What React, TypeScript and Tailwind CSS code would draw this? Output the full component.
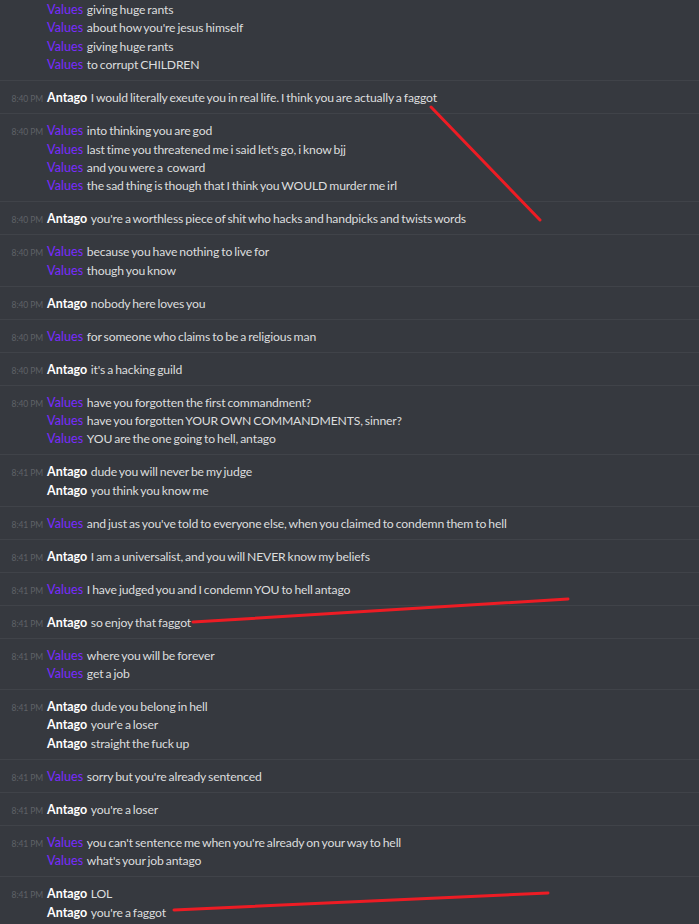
import React from "react";

type Line = { a: "V" | "A"; t: string };
type Group = { time?: string; lines: Line[] };

const groups: Group[] = [
  {
    lines: [
      { a: "V", t: "giving huge rants" },
      { a: "V", t: "about how you're jesus himself" },
      { a: "V", t: "giving huge rants" },
      { a: "V", t: "to corrupt CHILDREN" },
    ],
  },
  { time: "8:40 PM", lines: [{ a: "A", t: "I would literally exeute you in real life. I think you are actually a faggot" }] },
  {
    time: "8:40 PM",
    lines: [
      { a: "V", t: "into thinking you are god" },
      { a: "V", t: "last time you threatened me i said let's go, i know bjj" },
      { a: "V", t: "and you were a\u00a0 coward" },
      { a: "V", t: "the sad thing is though that I think you WOULD murder me irl" },
    ],
  },
  { time: "8:40 PM", lines: [{ a: "A", t: "you're a worthless piece of shit who hacks and handpicks and twists words" }] },
  {
    time: "8:40 PM",
    lines: [
      { a: "V", t: "because you have nothing to live for" },
      { a: "V", t: "though you know" },
    ],
  },
  { time: "8:40 PM", lines: [{ a: "A", t: "nobody here loves you" }] },
  { time: "8:40 PM", lines: [{ a: "V", t: "for someone who claims to be a religious man" }] },
  { time: "8:40 PM", lines: [{ a: "A", t: "it's a hacking guild" }] },
  {
    time: "8:40 PM",
    lines: [
      { a: "V", t: "have you forgotten the first commandment?" },
      { a: "V", t: "have you forgotten YOUR OWN COMMANDMENTS, sinner?" },
      { a: "V", t: "YOU are the one going to hell, antago" },
    ],
  },
  {
    time: "8:41 PM",
    lines: [
      { a: "A", t: "dude you will never be my judge" },
      { a: "A", t: "you think you know me" },
    ],
  },
  { time: "8:41 PM", lines: [{ a: "V", t: "and just as you've told to everyone else, when you claimed to condemn them to hell" }] },
  { time: "8:41 PM", lines: [{ a: "A", t: "I am a universalist, and you will NEVER know my beliefs" }] },
  { time: "8:41 PM", lines: [{ a: "V", t: "I have judged you and I condemn YOU to hell antago" }] },
  { time: "8:41 PM", lines: [{ a: "A", t: "so enjoy that faggot" }] },
  {
    time: "8:41 PM",
    lines: [
      { a: "V", t: "where you will be forever" },
      { a: "V", t: "get a job" },
    ],
  },
  {
    time: "8:41 PM",
    lines: [
      { a: "A", t: "dude you belong in hell" },
      { a: "A", t: "your'e a loser" },
      { a: "A", t: "straight the fuck up" },
    ],
  },
  { time: "8:41 PM", lines: [{ a: "V", t: "sorry but you're already sentenced" }] },
  { time: "8:41 PM", lines: [{ a: "A", t: "you're a loser" }] },
  {
    time: "8:41 PM",
    lines: [
      { a: "V", t: "you can't sentence me when you're already on your way to hell" },
      { a: "V", t: "what's your job antago" },
    ],
  },
  {
    time: "8:41 PM",
    lines: [
      { a: "A", t: "LOL" },
      { a: "A", t: "you're a faggot" },
    ],
  },
];

export default function App() {
  return (
    <div
      className="relative w-[699px] h-[924px] overflow-hidden bg-[#36393f]"
      style={{ fontFamily: "Lato, 'Open Sans', sans-serif" }}
    >
      <div className="-mt-[7px] flex flex-col">
        {groups.map((g, gi) => (
          <div
            key={gi}
            className={
              "pt-[8px] pb-[5.6px] " + (gi < groups.length - 1 ? "border-b border-[#404349]" : "")
            }
          >
            {g.lines.map((l, li) => (
              <div key={li} className="flex items-baseline h-[18.4px] leading-[18.4px]">
                <div className="w-[43px] shrink-0 text-right text-[8.5px] tracking-[-0.1px] text-[#5f6267]">
                  {li === 0 && g.time ? g.time : ""}
                </div>
                <div className="pl-[4px] text-[12.5px] whitespace-nowrap flex items-baseline">
                  {l.a === "V" ? (
                    <span className="text-[#7a2bff] tracking-[0.1px]">Values</span>
                  ) : (
                    <span className="font-bold text-white">Antago</span>
                  )}
                  <span className="ml-[3.5px] text-[12.2px] text-[#dcddde] tracking-[-0.15px] [word-spacing:-0.9px]">{l.t}</span>
                </div>
              </div>
            ))}
          </div>
        ))}
      </div>
      <svg className="absolute inset-0 pointer-events-none" width="699" height="924">
        <g stroke="#ed1c24" strokeWidth="3" strokeLinecap="round">
          <line x1="431" y1="107" x2="540" y2="220" />
          <line x1="193" y1="622" x2="568" y2="599" />
          <line x1="174" y1="910" x2="548" y2="893" />
        </g>
      </svg>
    </div>
  );
}
